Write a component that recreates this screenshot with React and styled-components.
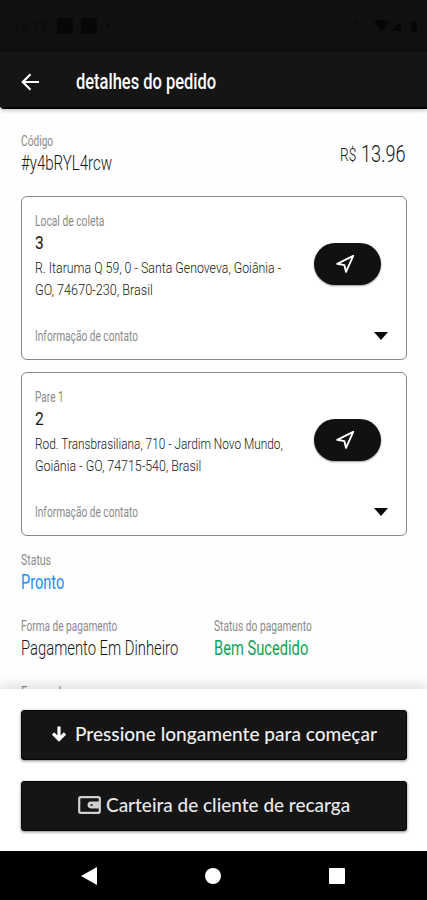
import React, { useLayoutEffect, useRef, useState } from 'react';
import styled, { createGlobalStyle } from 'styled-components';

const GlobalStyle = createGlobalStyle`
  * {
    box-sizing: border-box;
  }
  body {
    margin: 0;
    background: #ffffff;
    font-family: Roboto, 'Liberation Sans', sans-serif;
  }
`;

const Screen = styled.div`
  display: flex;
  flex-direction: column;
  width: 427px;
  height: 900px;
  overflow: hidden;
  background: #fefefe;
`;

const StatusBar = styled.div`
  display: flex;
  flex: none;
  align-items: center;
  justify-content: space-between;
  height: 52px;
  padding: 0 6px 0 12px;
  background: #101010;
  color: #080808;
  font-size: 14px;
`;
const StatusGroup = styled.div`
  display: flex;
  align-items: center;
  gap: 8px;
`;
const Clock = styled.span`
  width: 37px;
  color: #0b0b0b;
`;
const Notice = styled.span`
  width: 16px;
  height: 16px;
  background: #070707;
`;

const Header = styled.header`
  display: flex;
  flex: none;
  align-items: center;
  height: 57px;
  padding: 4px 20px 0;
  gap: 36px;
  background: #151515;
  border-bottom: 2px solid #030303;
  border-radius: 0 0 0 4px;
  box-shadow: 0 1px 4px rgba(0, 0, 0, 0.3);
`;

const Content = styled.main`
  flex: 1;
  min-height: 0;
  padding: 23px 20px 0 21px;
  overflow: hidden;
`;

const Row = styled.div`
  display: flex;
  align-items: flex-start;
  justify-content: space-between;
`;
const Price = styled.div`
  display: flex;
  align-items: center;
  gap: 5px;
  margin: 9px 1px 0 0;
`;

const Card = styled.section`
  height: 164px;
  margin-top: ${(props) => props.$top}px;
  padding: 15px 18px 0 13px;
  border: 1px solid #868686;
  border-radius: 6px;
  background: #ffffff;
`;
const Name = styled.div`
  margin: 2px 0 3px;
`;
const CardMain = styled.div`
  display: flex;
  align-items: flex-start;
  justify-content: space-between;
`;
const NavigateButton = styled.button`
  display: flex;
  align-items: center;
  justify-content: center;
  width: 67px;
  height: 42px;
  margin: 13px 7px 0 0;
  padding: 0 5px 0 0;
  border: 0;
  border-radius: 21px;
  background: #111111;
  box-shadow: 0 1px 2px rgba(0, 0, 0, 0.4);
`;
const Contact = styled.div`
  display: flex;
  align-items: center;
  justify-content: space-between;
  margin-top: 26px;
`;
const Caret = styled.span`
  border: 7px solid transparent;
  border-top: 8px solid #080808;
  border-bottom: 0;
`;

const Field = styled.div`
  width: ${(props) => props.$width || 193}px;
`;
const Fields = styled.div`
  display: flex;
  margin-top: ${(props) => props.$top}px;
`;
const Value = styled.div`
  margin: 1px 0;
`;

const Actions = styled.footer`
  position: relative;
  display: flex;
  flex: none;
  flex-direction: column;
  gap: 21px;
  height: 162px;
  padding: 21px 20px 0 21px;
  background: #ffffff;
  box-shadow: 0 -2px 14px rgba(0, 0, 0, 0.17);
`;
const ActionButton = styled.button`
  display: flex;
  align-items: center;
  justify-content: center;
  height: 50px;
  padding: 0 0 2px;
  gap: ${(props) => props.$gap}px;
  border: 1px solid #060606;
  border-radius: 3px;
  background: #151515;
  box-shadow: 0 1px 3px rgba(0, 0, 0, 0.5);
`;

const NavBar = styled.nav`
  display: flex;
  flex: none;
  align-items: center;
  justify-content: space-between;
  height: 49px;
  padding: 0 82px 0 81px;
  background: #000000;
`;

const LineBox = styled.span`
  display: block;
  flex: none;
  width: ${(props) => props.$width}px;
  height: ${(props) => props.$line}px;
  line-height: ${(props) => props.$line}px;
  white-space: nowrap;
`;
const Glyphs = styled.span`
  display: inline-block;
  vertical-align: top;
  transform-origin: 0 50%;
  font-family: ${(props) => (props.$round ? "Lato, 'Liberation Sans', sans-serif" : 'inherit')};
  font-size: ${(props) => props.$size}px;
  font-weight: ${(props) => props.$weight};
  color: ${(props) => props.$color};
`;

// Squeezes a line of text horizontally to the given width
function Condensed({ width, size, line, weight = 300, color = '#151515', round, children }) {
  const ref = useRef(null);
  const [scale, setScale] = useState(1);

  useLayoutEffect(() => {
    setScale(width / ref.current.offsetWidth);
  }, [width, children]);

  return (
    <LineBox $width={width} $line={line}>
      <Glyphs
        ref={ref}
        $size={size}
        $weight={weight}
        $color={color}
        $round={round}
        style={{ transform: `scaleX(${scale})` }}
      >
        {children}
      </Glyphs>
    </LineBox>
  );
}

function Label({ width, children }) {
  return <Condensed width={width} size={14} line={18} weight={400} color="#8a8a8a">{children}</Condensed>;
}

function BackIcon() {
  return (
    <svg width="20" height="20" viewBox="0 0 20 20" fill="none" stroke="#fff" strokeWidth="2.2">
      <path d="M19 10H3M10.5 2.2 2.8 10l7.7 7.8" />
    </svg>
  );
}

function SendIcon() {
  return (
    <svg width="22" height="22" viewBox="0 0 22 22" fill="none" stroke="#fff" strokeWidth="1.9" strokeLinejoin="round">
      <path d="M3.2 10.8 19.2 2.8 12 18.8 10.4 12.1Z" />
    </svg>
  );
}

function DownIcon() {
  return (
    <svg width="14" height="16" viewBox="0 0 14 16" fill="none" stroke="#fff" strokeWidth="3.2">
      <path d="M7 0.5v13M1 7.5l6 6 6-6" />
    </svg>
  );
}

function WalletIcon() {
  return (
    <svg width="23" height="18" viewBox="0 0 23 18" fill="none" stroke="#d0d0d0" strokeWidth="2.2">
      <rect x="1.2" y="1.2" width="20.6" height="15.6" rx="1.5" />
      <path d="M21 5.6h-8.2c-4.4 0-4.4 6.8 0 6.8H21Z" fill="#d0d0d0" stroke="none" />
      <circle cx="13.6" cy="9" r="1.1" fill="#151515" stroke="none" />
    </svg>
  );
}

function StatusIcons() {
  return (
    <svg width="70" height="14" viewBox="0 0 70 14" fill="#060606">
      <path d="M3 2h3v3H3zM8 4h3v3H8zM4 8h2v3H4z" fill="#0b0b0b" />
      <path d="M23 3q8-5 16 0l-8 9zM50 2v10H40zM60 2h6v11h-6z" />
    </svg>
  );
}

function Stop({ top, label, labelWidth, name, address }) {
  return (
    <Card $top={top}>
      <Label width={labelWidth}>{label}</Label>
      <CardMain>
        <div>
          <Name>
            <Condensed width={9} size={19} line={22} weight={400}>{name}</Condensed>
          </Name>
          {address.map((item) => (
            <Condensed key={item.text} width={item.width} size={15} line={22}>
              {item.text}
            </Condensed>
          ))}
        </div>
        <NavigateButton>
          <SendIcon />
        </NavigateButton>
      </CardMain>
      <Contact>
        <Label width={103}>Informação de contato</Label>
        <Caret />
      </Contact>
    </Card>
  );
}

function App() {
  return (
    <Screen>
      <GlobalStyle />
      <StatusBar>
        <StatusGroup>
          <Clock>13:19</Clock>
          <Notice />
          <Notice />
          <span>•</span>
        </StatusGroup>
        <StatusIcons />
      </StatusBar>
      <Header>
        <BackIcon />
        <Condensed width={140} size={22} line={30} weight={500} color="#ffffff">detalhes do pedido</Condensed>
      </Header>

      <Content>
        <Row>
          <div>
            <Label width={32}>Código</Label>
            <Value>
              <Condensed width={91} size={20} line={24}>#y4bRYL4rcw</Condensed>
            </Value>
          </div>
          <Price>
            <Condensed width={16} size={18} line={28}>R$</Condensed>
            <Condensed width={45} size={23} line={28}>13.96</Condensed>
          </Price>
        </Row>

        <Stop
          top={20}
          label="Local de coleta"
          labelWidth={69}
          name="3"
          address={[
            { text: 'R. Itaruma Q 59, 0 - Santa Genoveva, Goiânia -', width: 246 },
            { text: 'GO, 74670-230, Brasil', width: 118 },
          ]}
        />
        <Stop
          top={12}
          label="Pare 1"
          labelWidth={29}
          name="2"
          address={[
            { text: 'Rod. Transbrasiliana, 710 - Jardim Novo Mundo,', width: 248 },
            { text: 'Goiânia - GO, 74715-540, Brasil', width: 166 },
          ]}
        />

        <Fields $top={15}>
          <Field>
            <Label width={30}>Status</Label>
            <Value>
              <Condensed width={43} size={20} line={24} weight={400} color="#1a8cff">Pronto</Condensed>
            </Value>
          </Field>
        </Fields>
        <Fields $top={22}>
          <Field>
            <Label width={96}>Forma de pagamento</Label>
            <Value>
              <Condensed width={157} size={20} line={24}>Pagamento Em Dinheiro</Condensed>
            </Value>
          </Field>
          <Field>
            <Label width={98}>Status do pagamento</Label>
            <Value>
              <Condensed width={94} size={20} line={24} weight={400} color="#12a158">Bem Sucedido</Condensed>
            </Value>
          </Field>
        </Fields>
        <Fields $top={22}>
          <Label width={46}>Forma de</Label>
        </Fields>
      </Content>

      <Actions>
        <ActionButton $gap={9}>
          <DownIcon />
          <Condensed round width={302} size={19.5} line={24} weight={500} color="#f0f0f0">
            Pressione longamente para começar
          </Condensed>
        </ActionButton>
        <ActionButton $gap={5}>
          <WalletIcon />
          <Condensed round width={244} size={19.5} line={24} weight={500} color="#e8e8e8">
            Carteira de cliente de recarga
          </Condensed>
        </ActionButton>
      </Actions>

      <NavBar>
        <svg width="16" height="18" viewBox="0 0 16 18" fill="#fff">
          <path d="M0 9 16 0v18z" />
        </svg>
        <svg width="16" height="16" viewBox="0 0 16 16" fill="#fff">
          <circle cx="8" cy="8" r="8" />
        </svg>
        <svg width="16" height="16" viewBox="0 0 16 16" fill="#fff">
          <rect width="16" height="16" rx="1" />
        </svg>
      </NavBar>
    </Screen>
  );
}

export default App;
